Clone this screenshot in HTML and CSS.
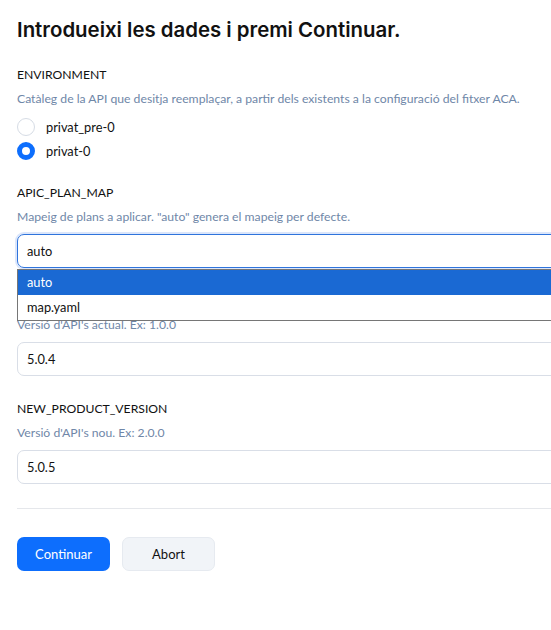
FILE: index.html
```html
<!DOCTYPE html>
<html lang="ca">
<head>
    <meta charset="UTF-8">
    <meta name="viewport" content="width=device-width, initial-scale=1.0">
    <title>Introdueixi les dades</title>
    <link rel="stylesheet" href="styles.css">
</head>
<body>
    <div class="page">
        <h1>Introdueixi les dades i premi Continuar.</h1>

        <form id="paramsForm">
            <!-- ENVIRONMENT -->
            <div class="field radio-field">
                <label class="field-label">ENVIRONMENT</label>
                <div class="field-help">Catàleg de la API que desitja reemplaçar, a partir dels existents a la configuració del fitxer ACA.</div>
                <label class="radio">
                    <span class="radio-dot"></span>
                    <span>privat_pre-0</span>
                </label>
                <label class="radio">
                    <span class="radio-dot checked"></span>
                    <span>privat-0</span>
                </label>
            </div>

            <!-- APIC_PLAN_MAP -->
            <div class="field">
                <label class="field-label">APIC_PLAN_MAP</label>
                <div class="field-help">Mapeig de plans a aplicar. "auto" genera el mapeig per defecte.</div>
                <div class="select-wrap">
                    <div class="input focused">auto</div>
                    <ul class="dropdown">
                        <li class="selected">auto</li>
                        <li>map.yaml</li>
                    </ul>
                </div>
            </div>

            <!-- CURRENT_PRODUCT_VERSION -->
            <div class="field">
                <label class="field-label">CURRENT_PRODUCT_VERSION</label>
                <div class="field-help">Versió d'API's actual. Ex: 1.0.0</div>
                <div class="input">5.0.4</div>
            </div>

            <!-- NEW_PRODUCT_VERSION -->
            <div class="field">
                <label class="field-label">NEW_PRODUCT_VERSION</label>
                <div class="field-help">Versió d'API's nou. Ex: 2.0.0</div>
                <div class="input">5.0.5</div>
            </div>

            <hr class="divider">

            <div class="actions">
                <button type="submit" class="btn btn-primary">Continuar</button>
                <button type="button" class="btn btn-secondary">Abort</button>
            </div>
        </form>
    </div>
</body>
</html>
```

FILE: styles.css
```css
html, body {
    margin: 0;
    overflow: hidden;
    background: #fff;
}

body {
    font-family: "Lato", "Noto Sans", sans-serif;
    font-size: 12.2px;
    color: #111;
}

.page {
    width: 600px;
    padding: 0 17px;
}

h1 {
    font-family: "Inter", "Lato", sans-serif;
    font-size: 20.4px;
    font-weight: 600;
    line-height: 28px;
    margin: 16px 0 22px;
    color: #111;
}

.field {
    margin-bottom: 24px;
}

.radio-field {
    margin-bottom: 21px;
}

.field-label {
    display: block;
    line-height: 17px;
    margin-bottom: 7px;
}

.field-help {
    color: #6f87a8;
    line-height: 17px;
    margin-bottom: 9px;
}

.radio-field .field-help {
    margin-bottom: 8px;
}

.radio {
    display: flex;
    align-items: center;
    gap: 11px;
    height: 24px;
    font-size: 12.8px;
}

.radio-dot {
    width: 18px;
    height: 18px;
    border: 1px solid #d6dce5;
    border-radius: 50%;
    box-sizing: border-box;
}

.radio-dot.checked {
    border: 5.5px solid #0d6efd;
    background: #fff;
}

.input {
    height: 34px;
    box-sizing: border-box;
    border: 1px solid #d9dee7;
    border-radius: 7px;
    padding: 0 9px;
    display: flex;
    align-items: center;
    font-size: 12.8px;
}

.input.focused {
    border-color: #2f74dc;
    box-shadow: 0 0 0 2px #dbe6fb;
}

.select-wrap {
    position: relative;
}

.dropdown {
    position: absolute;
    left: 0;
    right: 0;
    top: 100%;
    margin: 1px 0 0;
    padding: 0;
    list-style: none;
    border: 1px solid #767676;
    background: #fff;
    z-index: 2;
    font-size: 12.8px;
}

.dropdown li {
    height: 25px;
    line-height: 25px;
    padding: 0 9px;
}

.dropdown li.selected {
    background: #1a69d3;
    color: #fff;
}

.divider {
    border: 0;
    border-top: 1px solid #e5e7eb;
    margin: 1px 0 28px;
}

.actions {
    display: flex;
    gap: 12px;
}

.btn {
    font-family: inherit;
    font-size: 13px;
    height: 34px;
    width: 93px;
    border-radius: 7px;
    cursor: pointer;
}

.btn-primary {
    background: #0d6efd;
    color: #fff;
    border: none;
}

.btn-secondary {
    background: #f1f4f8;
    color: #111;
    border: 1px solid #e6eaf0;
}
```
